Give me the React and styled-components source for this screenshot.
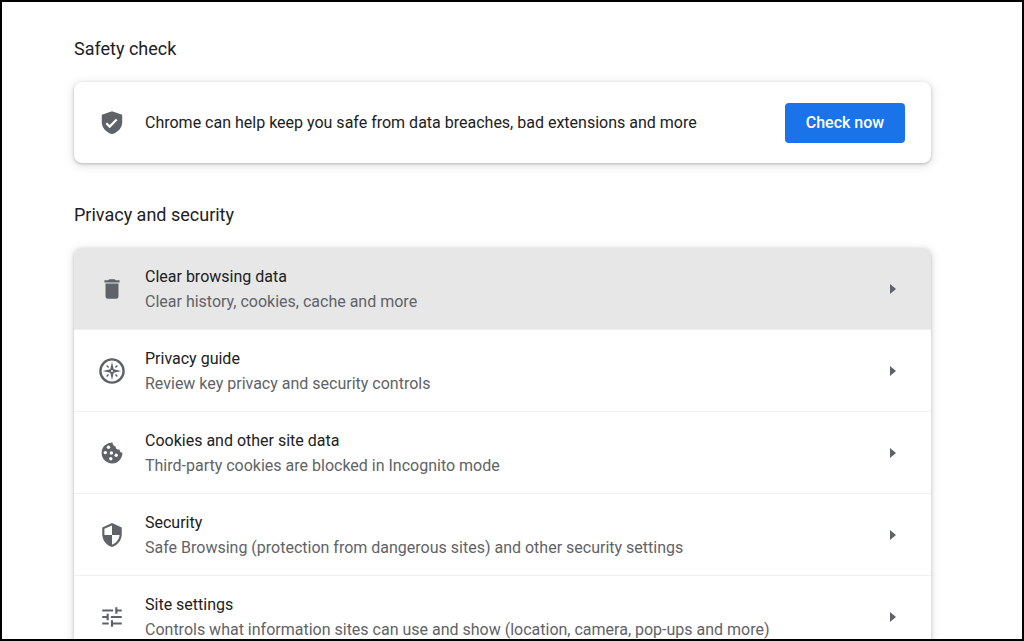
import React from 'react';
import styled, { createGlobalStyle } from 'styled-components';

const colors = {
  text: '#202124',
  secondary: '#5f6368',
  blue: '#1a73e8',
  hover: '#e7e7e7',
  line: '#f0f0f0',
};

const GlobalStyle = createGlobalStyle`
  *, *::before, *::after {
    box-sizing: border-box;
  }
  body {
    margin: 0;
    background: #fff;
    color: ${colors.text};
    font-family: Roboto, 'Liberation Sans', sans-serif;
  }
`;

const Page = styled.main`
  height: 100vh;
  overflow: hidden;
  border: 2px solid #000;
  padding: 35px 91px 0 72px;
`;

const Section = styled.section`
  margin-bottom: 40px;
`;

const Heading = styled.h2`
  margin: 0 0 21px;
  font-size: 18px;
  font-weight: 400;
  line-height: 24px;
`;

const Card = styled.div`
  border-radius: 8px;
  background: #fff;
  box-shadow: 0 1px 3px rgba(60, 64, 67, 0.3), 0 2px 8px 2px rgba(60, 64, 67, 0.12);
  overflow: hidden;
`;

const CheckRow = styled.div`
  display: flex;
  align-items: center;
  gap: 20px;
  min-height: 81px;
  padding: 0 26px 0 25px;
`;

const CheckText = styled.p`
  flex: 1;
  margin: 0;
  font-size: 16px;
  line-height: 25px;
`;

const CheckButton = styled.button`
  width: 120px;
  height: 40px;
  padding: 0;
  border: 0;
  border-radius: 4px;
  background: ${colors.blue};
  color: #fff;
  font-family: inherit;
  font-size: 16px;
  font-weight: 500;
  cursor: pointer;
`;

const List = styled.ul`
  margin: 0;
  padding: 0;
  list-style: none;
`;

const Item = styled.li`
  & + & {
    border-top: 1px solid ${colors.line};
  }
`;

const RowLink = styled.a`
  display: flex;
  align-items: center;
  gap: 20px;
  min-height: 81px;
  padding: 0 35px 0 25px;
  background: ${({ $active }) => ($active ? colors.hover : 'transparent')};
  color: inherit;
  text-decoration: none;
  &:hover {
    background: ${colors.hover};
  }
`;

const RowText = styled.div`
  flex: 1;
  font-size: 16px;
  line-height: 25px;
`;

const Description = styled.div`
  color: ${colors.secondary};
`;

const IconSvg = styled.svg`
  flex: none;
  width: 26px;
  height: 26px;
  fill: ${colors.secondary};
`;

const ArrowSvg = styled.svg`
  flex: none;
  width: 6px;
  height: 10px;
  fill: ${colors.secondary};
`;

const ShieldCheckIcon = () => (
  <IconSvg viewBox="0 0 26 26" aria-hidden="true">
    <path d="M13 1.3 2.8 4.8v7.4c0 5.6 4.3 10.2 10.2 11.9 5.9-1.7 10.2-6.3 10.2-11.9V4.8z" />
    <path d="m7.3 13.2 3.4 3.4 7-7.2" fill="none" stroke="#fff" strokeWidth="2.2" />
  </IconSvg>
);

const TrashIcon = () => (
  <IconSvg viewBox="0 0 24 24" aria-hidden="true">
    <path d="M6 19c0 1.1.9 2 2 2h8c1.1 0 2-.9 2-2V7H6v12zM19 4h-3.5l-1-1h-5l-1 1H5v2h14V4z" />
  </IconSvg>
);

const CompassIcon = () => (
  <IconSvg viewBox="0 0 26 26" aria-hidden="true">
    <circle cx="13" cy="13" r="11.6" fill="none" stroke={colors.secondary} strokeWidth="2.4" />
    <path
      fillRule="evenodd"
      d="m13 3.8 1.7 7.5 7.5 1.7-7.5 1.7-1.7 7.5-1.7-7.5L3.8 13l7.5-1.7zM13 12a1 1 0 1 0 0 2 1 1 0 0 0 0-2z"
    />
    <path
      d="m7.6 7.6 2 2M18.4 7.6l-2 2M7.6 18.4l2-2M18.4 18.4l-2-2"
      fill="none"
      stroke={colors.secondary}
      strokeWidth="1.4"
    />
  </IconSvg>
);

const CookieIcon = () => (
  <IconSvg viewBox="0 0 26 26" aria-hidden="true">
    <path d="M13.6 2.6A10.4 10.4 0 1 0 23.4 12.6c-1.6.1-2.8-1-2.8-2.6v-.6c-2 .6-4.2-.8-4-3-1.8 0-3.1-1.8-3-3.8z" />
    <g fill="#fff">
      <circle cx="9.5" cy="7.3" r="1.7" />
      <circle cx="6.3" cy="12.6" r="1.7" />
      <circle cx="12.4" cy="13" r="1.7" />
      <circle cx="17.2" cy="15.2" r="1.7" />
      <circle cx="11.8" cy="18.7" r="1.7" />
    </g>
  </IconSvg>
);

const SecurityIcon = () => (
  <IconSvg viewBox="0 0 24 24" aria-hidden="true">
    <path d="M12 1 3 5v6c0 5.55 3.84 10.74 9 12 5.16-1.26 9-6.45 9-12V5l-9-4zm0 10.99h7c-.53 4.12-3.28 7.79-7 8.94V12H5V6.3l7-3.11v8.8z" />
  </IconSvg>
);

const TuneIcon = () => (
  <IconSvg viewBox="0 0 24 24" aria-hidden="true">
    <path d="M3 17v2h6v-2H3zM3 5v2h10V5H3zm10 16v-2h8v-2h-8v-2h-2v6h2zM7 9v2H3v2h4v2h2V9H7zm14 4v-2H11v2h10zm-6-4h2V7h4V5h-4V3h-2v6z" />
  </IconSvg>
);

const Arrow = () => (
  <ArrowSvg viewBox="0 0 6 10" aria-hidden="true">
    <path d="M0 0v10l6-5z" />
  </ArrowSvg>
);

const items = [
  {
    id: 'clear-browsing-data',
    icon: TrashIcon,
    title: 'Clear browsing data',
    description: 'Clear history, cookies, cache and more',
    active: true,
  },
  {
    id: 'privacy-guide',
    icon: CompassIcon,
    title: 'Privacy guide',
    description: 'Review key privacy and security controls',
  },
  {
    id: 'cookies',
    icon: CookieIcon,
    title: 'Cookies and other site data',
    description: 'Third-party cookies are blocked in Incognito mode',
  },
  {
    id: 'security',
    icon: SecurityIcon,
    title: 'Security',
    description: 'Safe Browsing (protection from dangerous sites) and other security settings',
  },
  {
    id: 'site-settings',
    icon: TuneIcon,
    title: 'Site settings',
    description:
      'Controls what information sites can use and show (location, camera, pop-ups and more)',
  },
];

const App = () => (
  <>
    <GlobalStyle />
    <Page>
      <Section>
        <Heading>Safety check</Heading>
        <Card>
          <CheckRow>
            <ShieldCheckIcon />
            <CheckText>
              Chrome can help keep you safe from data breaches, bad extensions and more
            </CheckText>
            <CheckButton type="button">Check now</CheckButton>
          </CheckRow>
        </Card>
      </Section>
      <Section>
        <Heading>Privacy and security</Heading>
        <Card>
          <List>
            {items.map(({ id, icon: Icon, title, description, active }) => (
              <Item key={id}>
                <RowLink href={`#${id}`} $active={active}>
                  <Icon />
                  <RowText>
                    <div>{title}</div>
                    <Description>{description}</Description>
                  </RowText>
                  <Arrow />
                </RowLink>
              </Item>
            ))}
          </List>
        </Card>
      </Section>
    </Page>
  </>
);

export default App;
